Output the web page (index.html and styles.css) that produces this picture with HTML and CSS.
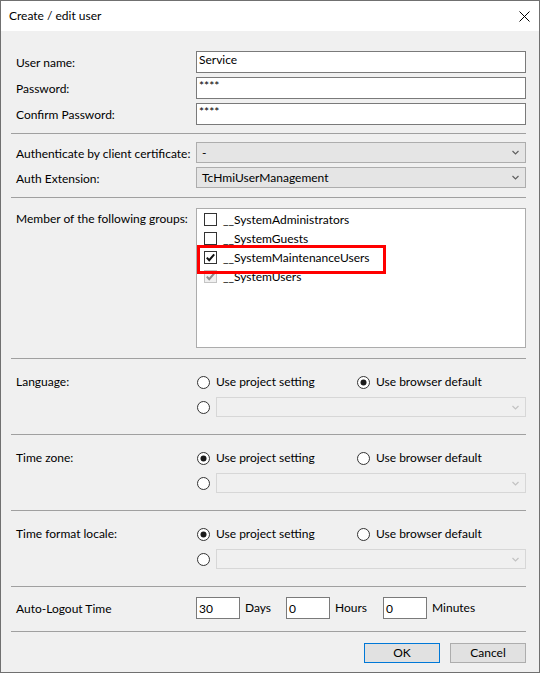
FILE: index.html
```html
<!DOCTYPE html>
<html>
<head>
<meta charset="utf-8">
<link rel="stylesheet" href="styles.css">
</head>
<body>
<div class="window">
  <div class="titlebar">
    <span class="title">Create / edit user</span>
    <svg class="close" width="11" height="11" viewBox="0 0 11 11"><path d="M0.5 0.5 L10.5 10.5 M10.5 0.5 L0.5 10.5" stroke="#000" stroke-width="1" fill="none"/></svg>
  </div>
  <div class="content">
    <section class="sec sec-user">
      <span class="lbl">User name:</span><div class="tb">Service</div>
      <span class="lbl">Password:</span><div class="tb">****</div>
      <span class="lbl">Confirm Password:</span><div class="tb">****</div>
    </section>
    <section class="sec sec-auth">
      <span class="lbl">Authenticate by client certificate:</span>
      <div class="sel"><span>-</span><svg class="chev" width="7" height="5" viewBox="0 0 7 5"><path d="M0.5 1 L3.5 4 L6.5 1" stroke="#606060" stroke-width="1.2" fill="none"/></svg></div>
      <span class="lbl">Auth Extension:</span>
      <div class="sel"><span>TcHmiUserManagement</span><svg class="chev" width="7" height="5" viewBox="0 0 7 5"><path d="M0.5 1 L3.5 4 L6.5 1" stroke="#606060" stroke-width="1.2" fill="none"/></svg></div>
    </section>
    <section class="sec sec-groups">
      <span class="lbl">Member of the following groups:</span>
      <div class="list">
        <div class="item"><span class="cb"></span><span>__SystemAdministrators</span></div>
        <div class="item"><span class="cb"></span><span>__SystemGuests</span></div>
        <div class="item hl"><span class="cb"><svg width="11" height="11" viewBox="0 0 11 11"><path d="M1.8 5.6 L4.2 8.2 L9.2 2.4" stroke="#111" stroke-width="2" fill="none"/></svg></span><span>__SystemMaintenanceUsers</span></div>
        <div class="item"><span class="cb dis"><svg width="11" height="11" viewBox="0 0 11 11"><path d="M1.8 5.6 L4.2 8.2 L9.2 2.4" stroke="#8c8c8c" stroke-width="2" fill="none"/></svg></span><span>__SystemUsers</span></div>
      </div>
    </section>
    <section class="sec sec-choice">
      <span class="lbl">Language:</span>
      <div class="radios">
        <div class="opt first"><svg class="rb" width="13" height="13" viewBox="0 0 13 13"><circle cx="6.5" cy="6.5" r="6" fill="#fff" stroke="#333"/></svg><span>Use project setting</span></div>
        <div class="opt"><svg class="rb" width="13" height="13" viewBox="0 0 13 13"><circle cx="6.5" cy="6.5" r="6" fill="#fff" stroke="#333"/><circle cx="6.5" cy="6.5" r="3" fill="#1a1a1a"/></svg><span>Use browser default</span></div>
      </div>
      <div class="radios">
        <svg class="rb" width="13" height="13" viewBox="0 0 13 13"><circle cx="6.5" cy="6.5" r="6" fill="#fff" stroke="#333"/></svg>
        <div class="sel dis"><span></span><svg class="chev" width="7" height="5" viewBox="0 0 7 5"><path d="M0.5 1 L3.5 4 L6.5 1" stroke="#c2c2c2" stroke-width="1.2" fill="none"/></svg></div>
      </div>
    </section>
    <section class="sec sec-choice">
      <span class="lbl">Time zone:</span>
      <div class="radios">
        <div class="opt first"><svg class="rb" width="13" height="13" viewBox="0 0 13 13"><circle cx="6.5" cy="6.5" r="6" fill="#fff" stroke="#333"/><circle cx="6.5" cy="6.5" r="3" fill="#1a1a1a"/></svg><span>Use project setting</span></div>
        <div class="opt"><svg class="rb" width="13" height="13" viewBox="0 0 13 13"><circle cx="6.5" cy="6.5" r="6" fill="#fff" stroke="#333"/></svg><span>Use browser default</span></div>
      </div>
      <div class="radios">
        <svg class="rb" width="13" height="13" viewBox="0 0 13 13"><circle cx="6.5" cy="6.5" r="6" fill="#fff" stroke="#333"/></svg>
        <div class="sel dis"><span></span><svg class="chev" width="7" height="5" viewBox="0 0 7 5"><path d="M0.5 1 L3.5 4 L6.5 1" stroke="#c2c2c2" stroke-width="1.2" fill="none"/></svg></div>
      </div>
    </section>
    <section class="sec sec-choice">
      <span class="lbl">Time format locale:</span>
      <div class="radios">
        <div class="opt first"><svg class="rb" width="13" height="13" viewBox="0 0 13 13"><circle cx="6.5" cy="6.5" r="6" fill="#fff" stroke="#333"/><circle cx="6.5" cy="6.5" r="3" fill="#1a1a1a"/></svg><span>Use project setting</span></div>
        <div class="opt"><svg class="rb" width="13" height="13" viewBox="0 0 13 13"><circle cx="6.5" cy="6.5" r="6" fill="#fff" stroke="#333"/></svg><span>Use browser default</span></div>
      </div>
      <div class="radios">
        <svg class="rb" width="13" height="13" viewBox="0 0 13 13"><circle cx="6.5" cy="6.5" r="6" fill="#fff" stroke="#333"/></svg>
        <div class="sel dis"><span></span><svg class="chev" width="7" height="5" viewBox="0 0 7 5"><path d="M0.5 1 L3.5 4 L6.5 1" stroke="#c2c2c2" stroke-width="1.2" fill="none"/></svg></div>
      </div>
    </section>
    <section class="sec sec-logout">
      <span class="lbl">Auto-Logout Time</span>
      <div class="logout">
        <div class="num">30</div><span class="unit u-days">Days</span>
        <div class="num">0</div><span class="unit u-hours">Hours</span>
        <div class="num">0</div><span class="unit">Minutes</span>
      </div>
    </section>
    <div class="footer">
      <div class="btn default">OK</div>
      <div class="btn">Cancel</div>
    </div>
  </div>
</div>
</body>
</html>
```
FILE: styles.css
```css
* { box-sizing: border-box; }
html, body { margin: 0; padding: 0; }
body {
  width: 540px;
  height: 673px;
  font-family: Lato, "Liberation Sans", sans-serif;
  font-size: 12px;
  line-height: 16px;
  color: #000;
  background: #f0f0f0;
}
.window {
  width: 540px;
  height: 673px;
  border: 1px solid #707070;
  background: #f0f0f0;
  display: flex;
  flex-direction: column;
}
.titlebar {
  height: 30px;
  flex: none;
  background: #fff;
  display: flex;
  align-items: center;
  justify-content: space-between;
  padding: 0 9px 0 8px;
}
.title { font-size: 12px; }
.close { display: block; }
.content {
  padding: 0 13px 0 10px;
  display: flex;
  flex-direction: column;
}
.sec {
  display: grid;
  grid-template-columns: 180px 330px;
  padding-left: 5px;
  border-bottom: 1px solid #a0a0a0;
}
.lbl { padding-top: 4px; white-space: nowrap; }
.sec-user { padding-top: 20px; padding-bottom: 8px; grid-auto-rows: 22px; row-gap: 4px; }
.tb {
  height: 22px;
  background: #fff;
  border: 1px solid #7a7a7a;
  padding: 0 2px;
  line-height: 16px;
}
.sec-auth { padding-top: 8px; padding-bottom: 9px; grid-auto-rows: 21px; row-gap: 4px; }
.sel {
  height: 21px;
  background: #e5e5e5;
  border: 1px solid #adadad;
  display: flex;
  align-items: center;
  justify-content: space-between;
  padding: 0 6px 0 5px;
}
.sel.dis {
  height: 20px;
  background: #f0f0f0;
  border-color: #d7d7d7;
  flex: 1;
}
.chev { display: block; }
.sec-groups { padding-top: 10px; padding-bottom: 10px; }
.sec-groups .lbl { padding-top: 3px; }
.list {
  height: 140px;
  background: #fff;
  border: 1px solid #acacac;
  padding: 1px 0 0 7px;
}
.item {
  height: 19px;
  display: flex;
  align-items: center;
  gap: 6px;
  white-space: nowrap;
}
.item.hl { position: relative; }
.item.hl::after {
  content: "";
  position: absolute;
  left: -7px;
  top: -3px;
  width: 183px;
  height: 23px;
  border: 3px solid #ff0000;
}
.cb {
  width: 13px;
  height: 13px;
  border: 1px solid #333;
  background: #fff;
  flex: none;
  display: flex;
  align-items: center;
  justify-content: center;
}
.cb.dis { border-color: #c4c4c4; background: #f0f0f0; }
.cb svg { display: block; }
.sec-choice { padding-top: 13px; padding-bottom: 17px; grid-template-rows: 20px 20px; row-gap: 5px; }
.sec-choice .lbl { padding-top: 2px; grid-row: span 2; }
.radios {
  display: flex;
  align-items: center;
  gap: 0;
  padding-left: 1px;
}
.opt { display: flex; align-items: center; gap: 6px; white-space: nowrap; }
.opt.first { width: 160px; }
.radios > .rb { margin-right: 6px; }
.rb { display: block; flex: none; }
.sec-logout { padding-top: 10px; padding-bottom: 12px; }
.logout { display: flex; align-items: center; height: 22px; }
.num {
  width: 44px;
  height: 22px;
  background: #fff;
  border: 1px solid #7a7a7a;
  padding: 2px 2px 0;
  line-height: 18px;
  flex: none;
}
.unit { padding-left: 5px; }
.u-days { width: 46px; }
.u-hours { width: 53px; }
.footer {
  display: flex;
  justify-content: flex-end;
  gap: 10px;
  padding-top: 11px;
}
.btn {
  width: 76px;
  height: 20px;
  background: #e1e1e1;
  border: 1px solid #adadad;
  display: flex;
  align-items: center;
  justify-content: center;
}
.btn.default { border-color: #0078d7; }
```
